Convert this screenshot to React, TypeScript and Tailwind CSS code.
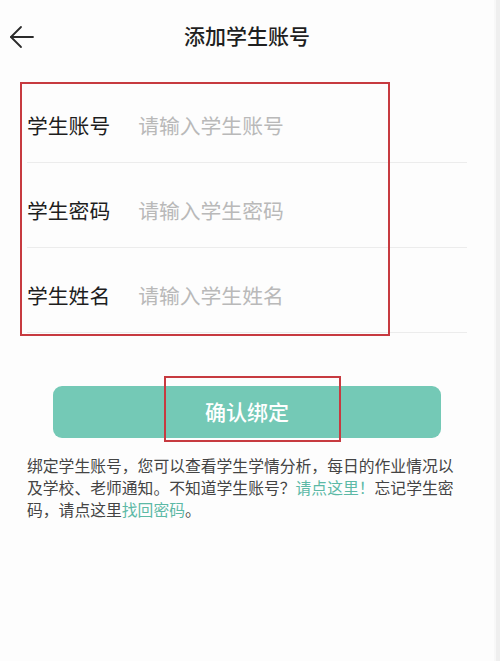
import React from 'react';

const font = { fontFamily: '"Noto Sans CJK SC", "Noto Sans", sans-serif' };

const fields = [
  { label: '学生账号', placeholder: '请输入学生账号' },
  { label: '学生密码', placeholder: '请输入学生密码' },
  { label: '学生姓名', placeholder: '请输入学生姓名' },
];

function BackArrow() {
  return (
    <svg width="26" height="24" viewBox="0 0 26 24" fill="none" stroke="#2b2b2b" strokeWidth="1.8" strokeLinecap="round" strokeLinejoin="round">
      <path d="M24 12H2" />
      <path d="M12 2L2 12L12 22" />
    </svg>
  );
}

export default function App() {
  return (
    <div className="flex min-h-[661px] w-[500px] bg-[#fdfdfd]" style={font}>
      <div className="relative flex-1">
        <header className="grid h-[72px] grid-cols-[48px_1fr_48px] items-center">
          <div className="flex pl-[9px] pt-[1px]">
            <BackArrow />
          </div>
          <h1 className="text-center text-[21px] font-medium text-[#1f1f1f]">添加学生账号</h1>
          <div />
        </header>

        <form className="mt-[6px] flex flex-col px-[27px]">
          {fields.map((f) => (
            <label
              key={f.label}
              className="flex h-[85px] items-center gap-[28px] border-b border-[#ececec] pt-[11px]"
            >
              <span className="text-[20.8px] text-[#1e1e1e]">{f.label}</span>
              <span className="text-[20.8px] text-[#b9b9b9]">{f.placeholder}</span>
            </label>
          ))}
        </form>

        <button
          type="button"
          className="mx-[53px] mt-[53px] flex h-[52px] w-[388px] items-center justify-center rounded-[9px] bg-[#74c9b6] text-[21px] font-medium text-white"
        >
          确认绑定
        </button>

        <p className="mt-[17px] w-[464px] pl-[27px] text-[15.8px] leading-[22px] text-[#444]">
          绑定学生账号，您可以查看学生学情分析，每日的作业情况以及学校、老师通知。不知道学生账号？
          <span className="text-[#5cb9a6]">请点这里！</span>
          忘记学生密码，请点这里
          <span className="text-[#5cb9a6]">找回密码</span>。
        </p>

        <div className="pointer-events-none absolute left-[20px] top-[82px] h-[254px] w-[370px] border-[2.5px] border-[#c73a40]" />
        <div className="pointer-events-none absolute left-[164px] top-[376px] h-[66px] w-[177px] border-[2.5px] border-[#c73a40]" />
      </div>
      <div className="w-[2px] bg-[#f8f8f8]" />
      <div className="w-[5px] bg-[#efefef]" />
    </div>
  );
}
